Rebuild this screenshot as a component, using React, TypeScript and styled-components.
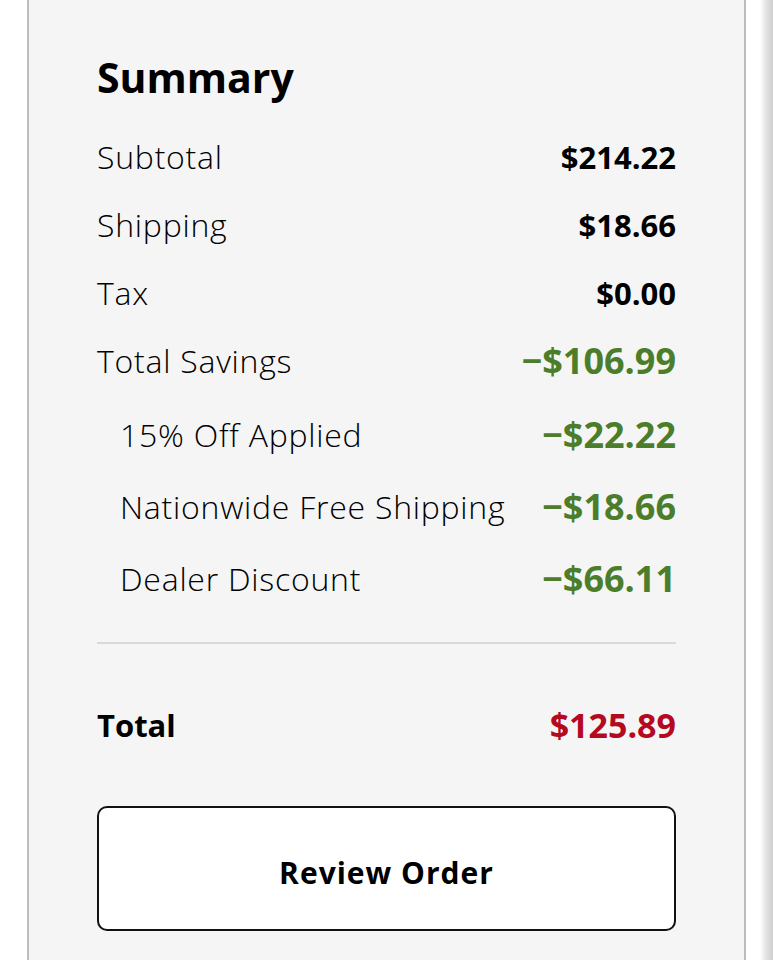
import React from "react";
import styled, { createGlobalStyle } from "styled-components";

const Global = createGlobalStyle`
  html, body {
    margin: 0;
    padding: 0;
    background: #ffffff;
    overflow: hidden;
  }
  body {
    font-family: "Open Sans", "Noto Sans", sans-serif;
    color: #000;
  }
`;

const Page = styled.div`
  display: flex;
  align-items: flex-start;
  width: 773px;
  height: 960px;
  overflow: hidden;
`;

const LeftGutter = styled.div`
  width: 27px;
  flex: none;
`;

const Panel = styled.section`
  flex: none;
  box-sizing: content-box;
  width: 579px;
  min-height: 1100px;
  background: #f5f5f5;
  border-left: 2px solid #bcbcbc;
  border-right: 2px solid #bcbcbc;
  padding: 40px 68px 120px 68px;
`;

const Spacer = styled.div`
  width: 14px;
  flex: none;
`;

const EdgeShade = styled.div`
  flex: 1;
  height: 960px;
  background: linear-gradient(to right, #ffffff 0%, #e4e4e4 45%, #cfcfcf 100%);
`;

const Heading = styled.h2`
  margin: 0 0 9px 0;
  font-size: 41px;
  line-height: 74px;
  font-weight: 700;
`;

const Row = styled.div<{ $sub?: boolean }>`
  display: flex;
  justify-content: space-between;
  align-items: center;
  height: ${(p) => (p.$sub ? 72 : 68)}px;
  padding-left: ${(p) => (p.$sub ? 23 : 0)}px;
`;

const SubGroup = styled.div`
  margin-top: 4px;
`;

const Label = styled.span`
  font-size: 32px;
  font-weight: 300;
  letter-spacing: 0.75px;
  line-height: 1;
`;

const Value = styled.span<{ $tone?: "plain" | "saving" }>`
  font-weight: 700;
  line-height: 1;
  font-size: ${(p) => (p.$tone === "saving" ? 36 : 31)}px;
  color: ${(p) => (p.$tone === "saving" ? "#4b7d2b" : "#000")};
`;

const Divider = styled.hr`
  margin: 27px 0 0 0;
  border: 0;
  height: 2px;
  background: #d9d9d9;
`;

const TotalRow = styled.div`
  display: flex;
  justify-content: space-between;
  align-items: center;
  height: 68px;
  margin-top: 47px;
`;

const TotalLabel = styled.span`
  font-size: 31px;
  font-weight: 700;
  line-height: 1;
`;

const TotalValue = styled.span`
  font-size: 34px;
  font-weight: 700;
  line-height: 1;
  color: #b5091f;
`;

const ReviewButton = styled.button`
  display: flex;
  align-items: center;
  justify-content: center;
  width: 100%;
  height: 125px;
  margin-top: 47px;
  padding: 7px 0 0 0;
  background: #ffffff;
  border: 2px solid #111;
  border-radius: 10px;
  font-family: "Open Sans", "Noto Sans", sans-serif;
  font-size: 30px;
  font-weight: 700;
  letter-spacing: 1px;
  color: #000;
  cursor: pointer;
  box-sizing: border-box;
`;

const mainRows = [
  { label: "Subtotal", value: "$214.22" },
  { label: "Shipping", value: "$18.66" },
  { label: "Tax", value: "$0.00" },
];

const savings = [
  { label: "15% Off Applied", value: "\u2212$22.22" },
  { label: "Nationwide Free Shipping", value: "\u2212$18.66" },
  { label: "Dealer Discount", value: "\u2212$66.11" },
];

export default function App() {
  return (
    <>
      <Global />
      <Page>
        <LeftGutter />
        <Panel>
          <Heading>Summary</Heading>
          {mainRows.map((r) => (
            <Row key={r.label}>
              <Label>{r.label}</Label>
              <Value>{r.value}</Value>
            </Row>
          ))}
          <Row>
            <Label>Total Savings</Label>
            <Value $tone="saving">{"\u2212$106.99"}</Value>
          </Row>
          <SubGroup>
            {savings.map((r) => (
              <Row $sub key={r.label}>
                <Label>{r.label}</Label>
                <Value $tone="saving">{r.value}</Value>
              </Row>
            ))}
          </SubGroup>
          <Divider />
          <TotalRow>
            <TotalLabel>Total</TotalLabel>
            <TotalValue>$125.89</TotalValue>
          </TotalRow>
          <ReviewButton>Review Order</ReviewButton>
        </Panel>
        <Spacer />
        <EdgeShade />
      </Page>
    </>
  );
}
